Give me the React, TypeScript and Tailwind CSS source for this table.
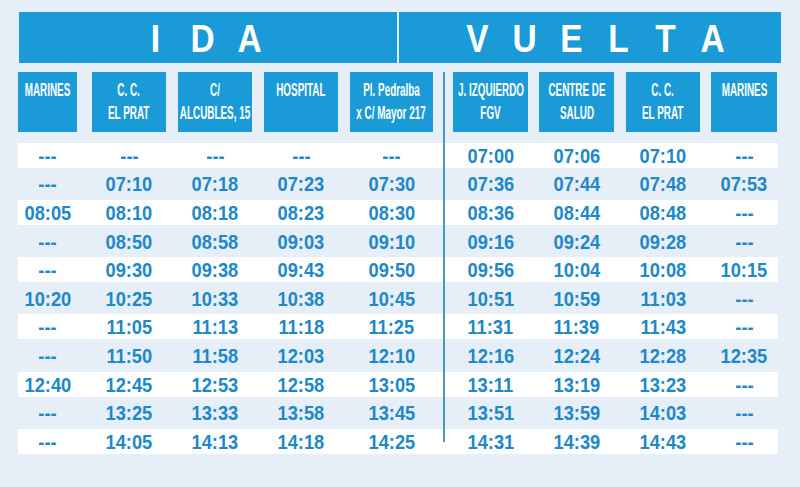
import React from "react";

const cols = [
    "w-[59px]",
    "ml-[15px] w-[74px]",
    "ml-[12px] w-[74px]",
    "ml-[12px] w-[74px]",
    "ml-[12px] w-[83px]",
    "ml-[20px] w-[75px]",
    "ml-[11px] w-[75px]",
    "ml-[12px] w-[74px]",
    "ml-[11px] w-[66px]",
];

const stops = [
    ["MARINES"],
    ["C. C.", "EL PRAT"],
    ["C/", "ALCUBLES, 15"],
    ["HOSPITAL"],
    ["Pl. Pedralba", "x C/ Mayor 217"],
    ["J. IZQUIERDO", "FGV"],
    ["CENTRE DE", "SALUD"],
    ["C. C.", "EL PRAT"],
    ["MARINES"],
];

const rows = [
    ["---", "---", "---", "---", "---", "07:00", "07:06", "07:10", "---"],
    ["---", "07:10", "07:18", "07:23", "07:30", "07:36", "07:44", "07:48", "07:53"],
    ["08:05", "08:10", "08:18", "08:23", "08:30", "08:36", "08:44", "08:48", "---"],
    ["---", "08:50", "08:58", "09:03", "09:10", "09:16", "09:24", "09:28", "---"],
    ["---", "09:30", "09:38", "09:43", "09:50", "09:56", "10:04", "10:08", "10:15"],
    ["10:20", "10:25", "10:33", "10:38", "10:45", "10:51", "10:59", "11:03", "---"],
    ["---", "11:05", "11:13", "11:18", "11:25", "11:31", "11:39", "11:43", "---"],
    ["---", "11:50", "11:58", "12:03", "12:10", "12:16", "12:24", "12:28", "12:35"],
    ["12:40", "12:45", "12:53", "12:58", "13:05", "13:11", "13:19", "13:23", "---"],
    ["---", "13:25", "13:33", "13:58", "13:45", "13:51", "13:59", "14:03", "---"],
    ["---", "14:05", "14:13", "14:18", "14:25", "14:31", "14:39", "14:43", "---"],
];

const Letters = ({word}: { word: string }) => <>
    {word.split("").map((l, i) =>
        <span key={i} className="inline-block w-[47px] text-center scale-x-[0.88]">{l}</span>)}
</>

const App = () => {
    return <div
        className="w-[800px] h-[487px] overflow-hidden bg-[#e6eef8] pt-[12px] font-['Liberation_Sans',Arial,sans-serif]">
        {/* IDA / VUELTA bar */}
        <div className="ml-[19px] w-[762px] h-[51px] flex bg-[#1b9ad8] text-white text-[38px] font-bold leading-none">
            <div className="w-[378px] flex justify-center items-center pr-[12px] pt-[3px]">
                <Letters word="IDA"/>
            </div>
            <div className="w-[2px] bg-[#d9eef9]"/>
            <div className="flex-1 flex justify-center items-center pl-[9px] pt-[3px]">
                <Letters word="VUELTA"/>
            </div>
        </div>

        <div className="relative mt-[9px]">
            {/* stop names */}
            <div className="flex pl-[18px] h-[60px]">
                {stops.map((s, i) =>
                    <div key={i}
                         className={`${cols[i]} bg-[#1b9ad8] flex flex-col items-center pt-[7px] text-white text-[18px] font-bold leading-[22.7px]`}>
                        {s.map((line, j) =>
                            <span key={j} className="inline-block whitespace-nowrap scale-x-[0.55]">{line}</span>)}
                    </div>)}
            </div>

            {/* times */}
            <div className="mt-[9px] ml-[18px] w-[760px]">
                {rows.map((r, i) =>
                    <div key={i} className="h-[28.6px] flex items-center">
                        <div className={`w-full h-[25px] flex items-center ${i % 2 === 0 ? "bg-white" : ""}`}>
                            {r.map((t, j) =>
                                <div key={j}
                                     className={`${cols[j]} text-center text-[21px] font-bold leading-none text-[#2088c8]`}>
                                    <span className="inline-block scale-x-[0.87]">{t}</span>
                                </div>)}
                        </div>
                    </div>)}
            </div>

            <div className="absolute left-[443px] top-0 w-[2px] h-[370px] bg-[#4a94c8]"/>
        </div>
    </div>
}

export default App
